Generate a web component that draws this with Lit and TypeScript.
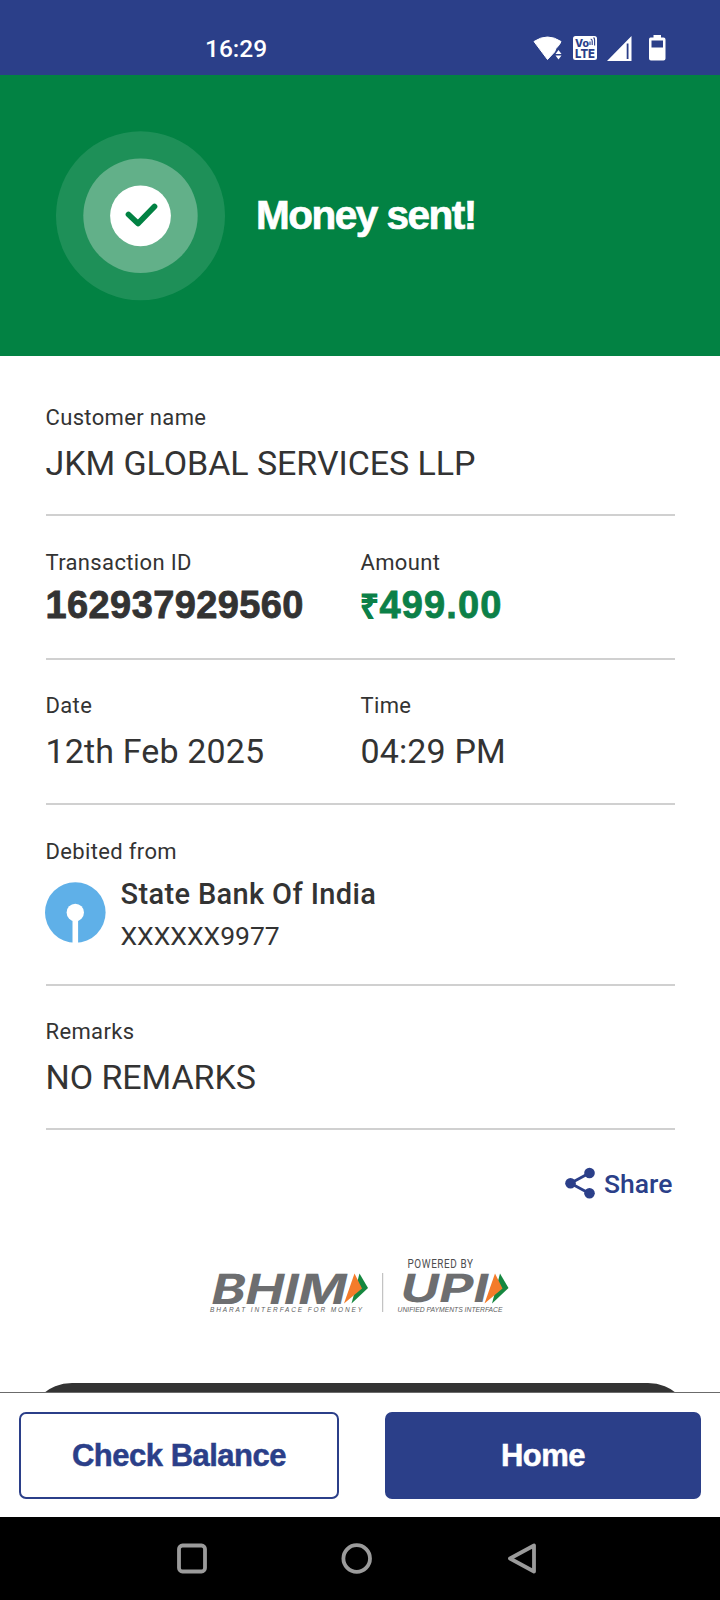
import { LitElement, html, css, svg } from "lit";
import { customElement, property } from "lit/decorators.js";

@customElement("status-bar")
class StatusBar extends LitElement {
  static styles = css`
    :host { display: flex; height: 75px; background: #2b3f89; color: #fff; box-sizing: border-box; padding: 0 0 0 205px; }
    .time { font: 500 24.5px/30px Roboto, sans-serif; padding-top: 34px; width: 326px; letter-spacing: 0; }
    .icons { width: 150px; height: 75px; }
    .volte { font-family: Inter, "Liberation Sans", sans-serif; font-weight: 800; }
  `;
  render() {
    return html`
      <div class="time">16:29</div>
      <svg class="icons" viewBox="531 0 150 75">
        <path d="M534 41.5Q547.5 32.500 561 41.5L559.5 44.5L556 48.5L554.5 52L547.5 59.5Z" fill="#fff" stroke="#fff" stroke-width="1" stroke-linejoin="round"/>
        <path d="M558.5 50l3 4h-6zM558.5 59.5l3-4h-6z" fill="#fff"/>
        <rect x="573" y="36" width="24" height="24" rx="2.5" fill="#fff"/>
        <text class="volte" x="575" y="46.800" font-size="10" fill="#2b3f89" textLength="14" lengthAdjust="spacingAndGlyphs">Vo</text>
        <path d="M590 45v-3.500M592.200 45v-4q0-1.500-1.500-2M594.600 45.500v-5.500q0-1.500-1-2.500" fill="none" stroke="#2b3f89" stroke-width="1.100"/>
        <text class="volte" x="575" y="57.800" font-size="12" fill="#2b3f89" textLength="20" lengthAdjust="spacingAndGlyphs">LTE</text>
        <path fill-rule="evenodd" d="M631.500 36V61H607ZM626.700 43.500V59H628.500V43.500Z" fill="#fff"/>
        <path fill-rule="evenodd" d="M650.500 37.500H653.500V35H661V37.500H663.500Q665.500 37.500 665.500 39.500V58.500Q665.500 60.500 663.500 60.500H651Q649 60.500 649 58.500V39.500Q649 37.500 650.500 37.500ZM651.500 40.500V47.500H663V40.500Z" fill="#fff"/>
      </svg>`;
  }
}

@customElement("success-banner")
class SuccessBanner extends LitElement {
  static styles = css`
    :host { display: flex; height: 281px; background: #028243; color: #fff; padding-left: 56px; box-sizing: border-box; }
    .rings { width: 169px; height: 170px; margin: 56px 31px 0 0; flex: none; }
    .title { font: bold 40.500px/48px "Liberation Sans", Arial, sans-serif; letter-spacing: -1.500px; -webkit-text-stroke: 0.7px #fff; margin: 116px 0 0; white-space: nowrap; }
  `;
  render() {
    return html`
      <svg class="rings" viewBox="0 0 169 170">
        <circle cx="84.5" cy="84.8" r="84.5" fill="#1e9058"/>
        <circle cx="84.5" cy="84.8" r="57.2" fill="#62b089"/>
        <circle cx="84.5" cy="84.8" r="30.400" fill="#fff"/>
        <path d="M72.500 83.500l9.500 9L98.500 75.500" fill="none" stroke="#028243" stroke-width="5.700" stroke-linecap="round" stroke-linejoin="round"/>
      </svg>
      <h1 class="title">Money sent!</h1>`;
  }
}

@customElement("detail-field")
class DetailField extends LitElement {
  @property() label = "";
  @property() value = "";
  @property({ reflect: true }) kind = "plain";
  static styles = css`
    :host { display: block; white-space: nowrap; color: #333; font-family: Roboto, sans-serif; }
    .label { font-size: 22px; line-height: 26px; letter-spacing: 0.350px; }
    .value { font-size: 34px; line-height: 40px; margin-top: 12px; letter-spacing: -0.060px; }
    :host([kind="date"]) .value { letter-spacing: 0.130px; }
    :host([kind="strong"]) .value, :host([kind="money"]) .value {
      font: bold 38px/44px "Liberation Sans", Arial, sans-serif; letter-spacing: 0.400px; -webkit-text-stroke: 0.8px currentColor; margin-top: 7px; }
    :host([kind="money"]) .value { color: #0c8048; letter-spacing: 1.150px; }
    .rupee { font-size: 33px; line-height: 1; letter-spacing: 0; margin-left: -0.500px; margin-right: 0.500px; }
  `;
  render() {
    return html`<div class="label">${this.label}</div>
      ${this.value
        ? html`<div class="value">${this.kind === "money" ? html`<span class="rupee">₹</span>` : ""}${this.value}</div>`
        : ""}`;
  }
}

@customElement("payment-logos")
class PaymentLogos extends LitElement {
  static styles = css`
    :host { display: block; height: 70px; padding-left: 200px; }
    .logos { display: block; width: 320px; height: 70px; overflow: visible; }
    .mark { font-family: Inter, "Liberation Sans", sans-serif; font-weight: 700; fill: #6d6e70; }
    .tag { font-family: "Liberation Sans", Arial, sans-serif; font-style: italic; fill: #5d5e60; }
    .powered { font-family: "Liberation Sans Narrow", Roboto, "Liberation Sans", sans-serif; fill: #4d4d4f; }
  `;
  arrows(x: number) {
    return svg`<g transform="translate(${x} 0)">
      <path d="M9.500 23.500L18 38L1.500 53.500Z" fill="#15873f"/>
      <path d="M4.500 23.500L12 38.500L-6 53.500Z" fill="#f47b2a"/>
    </g>`;
  }
  render() {
    return html`<svg class="logos" viewBox="0 0 320 70">
      <text class="mark" transform="translate(9 53.500) skewX(-13)" font-size="41.500" x="0" y="0" textLength="135" lengthAdjust="spacingAndGlyphs">BHIM</text>
      ${this.arrows(150)}
      <text class="tag" x="10" y="62" font-size="6.500" textLength="152">BHARAT INTERFACE FOR MONEY</text>
      <path d="M182.700 23V62" stroke="#b5b5b5" stroke-width="1"/>
      <text class="powered" x="207.500" y="18" font-size="13" letter-spacing="0.800" textLength="66" lengthAdjust="spacingAndGlyphs">POWERED BY</text>
      <text class="mark" transform="translate(198 52) skewX(-13)" font-size="39" x="0" y="0" textLength="88" lengthAdjust="spacingAndGlyphs">UPI</text>
      ${this.arrows(290.500)}
      <text class="tag" x="197.500" y="62" font-size="8" textLength="105" lengthAdjust="spacingAndGlyphs">UNIFIED PAYMENTS INTERFACE</text>
    </svg>`;
  }
}

@customElement("app-root")
class AppRoot extends LitElement {
  static styles = css`
    :host { display: flex; flex-direction: column; width: 720px; height: 1600px; overflow: hidden; background: #fff; color: #333; font-family: Roboto, sans-serif; }
    .details { padding: 0 45px 0 45.500px; }
    .row { display: grid; grid-template-columns: 315px 1fr; box-sizing: border-box; height: 144px; padding-top: 33px; border-bottom: 2px solid #d0d0d0; align-content: start; }
    .first { height: 160px; padding-top: 49px; }
    .ids { padding-top: 34px; }
    .tall { height: 145px; }
    .bank-row { height: 181px; padding-top: 34px; }
    .wide { grid-column: 1 / -1; }
    .bank { display: flex; margin: 17px 0 0 -0.500px; grid-column: 1 / -1; white-space: nowrap; }
    .bank-logo { width: 61px; height: 61px; margin-right: 14.500px; }
    .bank-text { margin-top: -5px; }
    .bank-name { font-size: 29px; line-height: 34px; font-weight: 500; letter-spacing: 0.360px; }
    .account { font-size: 26.500px; line-height: 32px; margin-top: 9px; }
    .share { display: flex; height: 120px; padding-left: 518px; color: #2b3f89; }
    .share-icon { width: 32px; height: 32px; margin: 37px 8.500px 0 0; }
    .share-label { font-size: 26.500px; line-height: 32px; font-weight: 500; margin-top: 38px; }
    .more { flex: 1; overflow: hidden; padding: 63px 28px 0 28px; }
    .sheet { height: 100px; background: #333; border-radius: 44px; }
    .scroll { height: 1036px; display: flex; flex-direction: column; overflow: hidden; }
    .actions { height: 125px; box-sizing: border-box; border-top: 1px solid #6b6b6b; background: #fff; display: flex; gap: 46px; padding: 19px 19px 0; }
    .btn { box-sizing: border-box; height: 87px; border-radius: 7px; border: 2px solid #2b3f89; font: bold 31px/82px "Liberation Sans", Arial, sans-serif; letter-spacing: -0.500px; -webkit-text-stroke: 0.5px currentColor; text-align: center; width: 320px; color: #2b3f89; background: #fff; padding: 0; white-space: nowrap; }
    .primary { background: #2b3f89; color: #fff; width: 316px; }
    .nav { flex: 1; background: #000; }
    .nav-icons { display: block; width: 720px; height: 83px; }
  `;
  render() {
    return html`
      <status-bar></status-bar>
      <success-banner></success-banner>
      <main class="scroll">
        <div class="details">
          <div class="row first"><detail-field class="wide" label="Customer name" value="JKM GLOBAL SERVICES LLP"></detail-field></div>
          <div class="row ids">
            <detail-field kind="strong" label="Transaction ID" value="162937929560"></detail-field>
            <detail-field kind="money" label="Amount" value="499.00"></detail-field>
          </div>
          <div class="row tall">
            <detail-field kind="date" label="Date" value="12th Feb 2025"></detail-field>
            <detail-field kind="date" label="Time" value="04:29 PM"></detail-field>
          </div>
          <div class="row bank-row">
            <detail-field class="wide" label="Debited from"></detail-field>
            <div class="bank">
              <svg class="bank-logo" viewBox="0 0 61 61">
                <circle cx="30.300" cy="30.500" r="30.300" fill="#5fb0e8"/>
                <circle cx="30.300" cy="30.500" r="8.700" fill="#fff"/>
                <path d="M30.300 31V61" stroke="#fff" stroke-width="5.600"/>
              </svg>
              <div class="bank-text">
                <div class="bank-name">State Bank Of India</div>
                <div class="account">XXXXXX9977</div>
              </div>
            </div>
          </div>
          <div class="row"><detail-field class="wide" label="Remarks" value="NO REMARKS"></detail-field></div>
          <div class="share">
            <svg class="share-icon" viewBox="0 0 32 32">
              <path d="M25.500 6L6.500 16.200L25.500 26.500" fill="none" stroke="#2b3f89" stroke-width="2.800"/>
              <circle cx="25.500" cy="6" r="5.300" fill="#2b3f89"/><circle cx="6.500" cy="16.200" r="5.300" fill="#2b3f89"/><circle cx="25.500" cy="26.300" r="5.300" fill="#2b3f89"/>
            </svg>
            <span class="share-label">Share</span>
          </div>
        </div>
        <payment-logos></payment-logos>
        <div class="more"><div class="sheet"></div></div>
      </main>
      <div class="actions">
        <button class="btn">Check Balance</button>
        <button class="btn primary">Home</button>
      </div>
      <div class="nav">
        <svg class="nav-icons" viewBox="0 1517 720 83">
          <g fill="none" stroke="#9b9b9b" stroke-width="3.800" stroke-linejoin="round">
            <rect x="179" y="1545.500" width="26" height="26" rx="3.500"/>
            <circle cx="356.700" cy="1558.500" r="13.300"/>
            <path d="M534 1545.500V1571.500L510 1558.500Z"/>
          </g>
        </svg>
      </div>`;
  }
}
